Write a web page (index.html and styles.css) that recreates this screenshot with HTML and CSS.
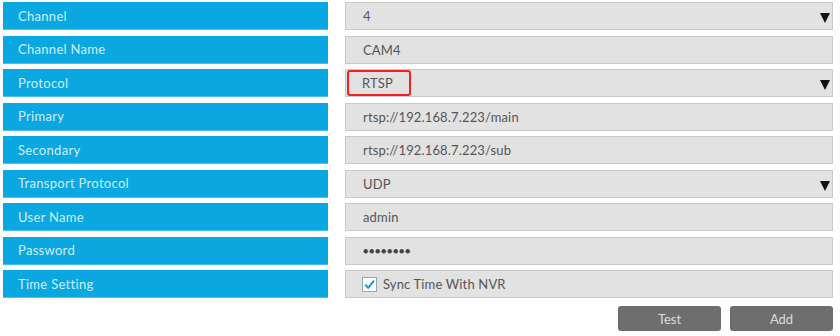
FILE: index.html
```html
<!DOCTYPE html>
<html lang="en">

<head>
    <meta charset="UTF-8">
    <meta name="viewport" content="width=device-width, initial-scale=1.0">
    <title>Add IP Camera</title>
    <link rel="stylesheet" href="styles.css">
</head>

<body>
    <div class="form">
        <div class="label">Channel</div>
        <div class="field select">4<span class="arrow"></span></div>

        <div class="label">Channel Name</div>
        <div class="field">CAM4</div>

        <div class="label">Protocol</div>
        <div class="field select"><span class="mark">RTSP</span><span class="arrow"></span></div>

        <div class="label">Primary</div>
        <div class="field">rtsp://192.168.7.223/main</div>

        <div class="label">Secondary</div>
        <div class="field">rtsp://192.168.7.223/sub</div>

        <div class="label">Transport Protocol</div>
        <div class="field select">UDP<span class="arrow"></span></div>

        <div class="label">User Name</div>
        <div class="field">admin</div>

        <div class="label">Password</div>
        <div class="field dots">&#9679;&#9679;&#9679;&#9679;&#9679;&#9679;&#9679;&#9679;</div>

        <div class="label">Time Setting</div>
        <div class="field check">
            <span class="box">
                <svg width="13" height="13" viewBox="0 0 13 13">
                    <path d="M2.3 6.6 L5.2 9.8 L11 2.6" fill="none" stroke="#1a8fd8" stroke-width="2" />
                </svg>
            </span>
            Sync Time With NVR
        </div>
    </div>

    <div class="buttons">
        <button>Test</button>
        <button>Add</button>
    </div>
</body>

</html>
```

FILE: styles.css
```css
body {
    margin: 2px 0 0 3px;
    width: 830px;
    font-family: "Lato", "Open Sans", sans-serif;
    font-size: 13px;
    background-color: #fff;
}

.form {
    display: grid;
    grid-template-columns: 325px 488px;
    column-gap: 17px;
    row-gap: 5.5px;
}

.label,
.field {
    height: 28px;
    box-sizing: border-box;
    display: flex;
    align-items: center;
}

.label {
    background-color: #0ba7e1;
    color: #cdeefb;
    padding-left: 15px;
    letter-spacing: 0.3px;
    border-bottom: 1px solid #4cc0ea;
}

.field {
    background-color: #e2e2e2;
    border: 1px solid #c9c9c9;
    color: #555;
    padding-left: 17px;
    letter-spacing: 0.15px;
    position: relative;
}

.select {
    padding-right: 30px;
}

.arrow {
    position: absolute;
    right: 2px;
    top: 10px;
    border-left: 5.5px solid transparent;
    border-right: 5.5px solid transparent;
    border-top: 10px solid #111;
}

.mark {
    position: absolute;
    left: 1px;
    top: 0;
    width: 64px;
    height: 26px;
    box-sizing: border-box;
    border: 2.5px solid #f5201c;
    border-radius: 3px;
    padding-left: 13px;
    display: flex;
    align-items: center;
}

.dots {
    font-size: 9px;
    letter-spacing: 0.6px;
    color: #444;
}

.check {
    padding-left: 16px;
    gap: 6px;
}

.box {
    width: 13px;
    height: 13px;
    border: 1px solid #8aaac0;
    background-color: #fff;
    display: flex;
}

.buttons {
    display: flex;
    justify-content: flex-end;
    gap: 9px;
    margin-top: 8px;
}

button {
    width: 103px;
    height: 25px;
    background-color: #6e6e6e;
    color: #dcdcdc;
    border: none;
    border-radius: 3px;
    font-family: "Lato", "Open Sans", sans-serif;
    font-size: 13px;
}
```
